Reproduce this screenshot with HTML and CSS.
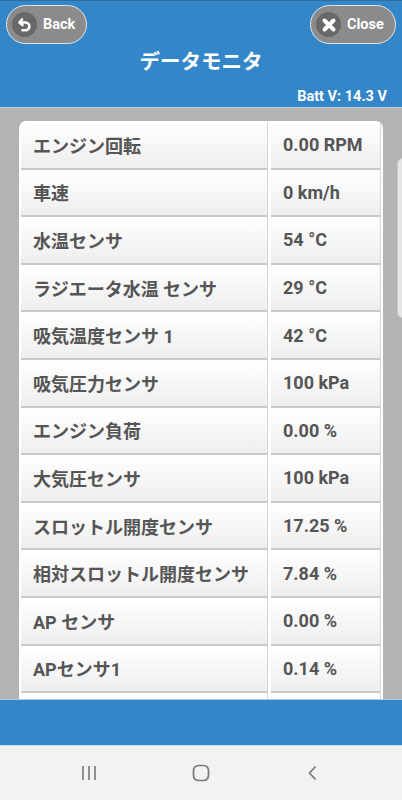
FILE: index.html
```html
<!DOCTYPE html>
<html lang="ja">
<head>
<meta charset="utf-8">
<title>データモニタ</title>
<link rel="stylesheet" href="styles.css">
</head>
<body>
<div class="app">
  <header class="header">
    <div class="btn-row">
      <button class="pill">
        <span class="pill-icon">
          <svg width="24" height="24" viewBox="0 0 24 24"><path d="M9 6.5 L6.5 9.5 L9.5 12" fill="none" stroke="#fff" stroke-width="2.6" stroke-linecap="round" stroke-linejoin="round"/><path d="M7 9.5 H12.5 A3.8 3.8 0 0 1 12.5 17.2 H9.5" fill="none" stroke="#fff" stroke-width="2.6" stroke-linecap="round"/></svg>
        </span>
        <span class="pill-text">Back</span>
      </button>
      <button class="pill pill-close">
        <span class="pill-icon">
          <svg width="24" height="24" viewBox="0 0 24 24"><path d="M7.5 7.5 L16.5 16.5 M16.5 7.5 L7.5 16.5" fill="none" stroke="#fff" stroke-width="4" stroke-linecap="round"/></svg>
        </span>
        <span class="pill-text">Close</span>
      </button>
    </div>
    <h1 class="title">データモニタ</h1>
    <div class="batt">Batt V: 14.3 V</div>
  </header>
  <main class="content">
    <div class="card">
      <div class="cell label">エンジン回転</div><div class="cell value">0.00 RPM</div>
      <div class="cell label">車速</div><div class="cell value">0 km/h</div>
      <div class="cell label">水温センサ</div><div class="cell value">54 °C</div>
      <div class="cell label">ラジエータ水温 センサ</div><div class="cell value">29 °C</div>
      <div class="cell label">吸気温度センサ 1</div><div class="cell value">42 °C</div>
      <div class="cell label">吸気圧力センサ</div><div class="cell value">100 kPa</div>
      <div class="cell label">エンジン負荷</div><div class="cell value">0.00 %</div>
      <div class="cell label">大気圧センサ</div><div class="cell value">100 kPa</div>
      <div class="cell label">スロットル開度センサ</div><div class="cell value">17.25 %</div>
      <div class="cell label">相対スロットル開度センサ</div><div class="cell value">7.84 %</div>
      <div class="cell label">AP センサ</div><div class="cell value">0.00 %</div>
      <div class="cell label">APセンサ1</div><div class="cell value">0.14 %</div>
      <div class="cell label"></div><div class="cell value"></div>
    </div>
    <div class="scroll-thumb"></div>
  </main>
  <footer class="footer"></footer>
  <nav class="navbar">
    <svg width="18" height="18" viewBox="0 0 18 18"><path d="M3 2 V16 M9 2 V16 M15 2 V16" stroke="#777" stroke-width="1.6"/></svg>
    <svg width="20" height="20" viewBox="0 0 20 20"><rect x="2.5" y="2.5" width="15" height="15" rx="5" fill="none" stroke="#777" stroke-width="1.7"/></svg>
    <svg width="18" height="18" viewBox="0 0 18 18"><path d="M11.5 2.5 L5.5 9 L11.5 15.5" fill="none" stroke="#777" stroke-width="1.7"/></svg>
  </nav>
</div>
</body>
</html>
```
FILE: styles.css
```css
* { box-sizing: border-box; }
html, body { margin: 0; padding: 0; }
body {
  font-family: Roboto, "Noto Sans CJK JP", "Noto Sans", sans-serif;
  background: #b3b3b3;
}
.app {
  width: 402px;
  height: 800px;
  display: flex;
  flex-direction: column;
  overflow: hidden;
}
.header {
  height: 108px;
  background: #3386c8;
  border-top: 1px solid #2b6ea6;
  border-bottom: 1px solid #b9d3e8;
  position: relative;
  flex: none;
}
.btn-row {
  display: flex;
  justify-content: space-between;
  padding: 4px 6px 0 6px;
}
.pill {
  height: 39px;
  border-radius: 20px;
  border: 1px solid #e4e4e4;
  background: #8b8b8b;
  display: flex;
  align-items: center;
  gap: 6px;
  padding: 0 0 0 5px;
  width: 81px;
  font-family: Roboto, sans-serif;
}
.pill-close { width: 86px; }
.pill-icon {
  width: 25px;
  height: 25px;
  border-radius: 50%;
  background: #686868;
  display: flex;
  align-items: center;
  justify-content: center;
}
.pill-text {
  color: #fff;
  font-weight: bold;
  font-size: 14.5px;
}
.title {
  margin: 0;
  text-align: center;
  color: #fff;
  font-size: 20.5px;
  font-weight: bold;
  line-height: 26px;
  margin-top: 3px;
  font-family: "Noto Sans CJK JP", sans-serif;
}
.batt {
  position: absolute;
  right: 15px;
  bottom: 2px;
  color: #fff;
  font-weight: bold;
  font-size: 14.5px;
  line-height: 16px;
}
.content {
  flex: 1;
  position: relative;
  overflow: hidden;
  padding: 13px 19px 0 19px;
}
.card {
  background: #fff;
  border-radius: 7px;
  padding: 1px 2px 0 2px;
  display: grid;
  grid-template-columns: 1fr 110px;
  grid-auto-rows: 47.6px;
  column-gap: 3px;
}
.cell {
  display: flex;
  align-items: center;
  padding: 0 12px;
  background: linear-gradient(#ffffff, #eeeeee);
  border-bottom: 2px solid #c9c9c9;
  border-right: 1px solid #d6d6d6;
  color: #555;
  font-weight: bold;
  font-size: 18px;
  white-space: nowrap;
}
.label:first-child { border-top-left-radius: 6px; }
.scroll-thumb {
  position: absolute;
  right: -6px;
  top: 50px;
  width: 11px;
  height: 160px;
  border-radius: 6px;
  background: #e6e6e6;
  border: 1px solid #c8c8c8;
}
.footer {
  height: 47px;
  background: #3386c8;
  border-top: 1px solid #a9cce8;
  border-bottom: 1px solid #c8dff0;
  flex: none;
}
.navbar {
  height: 54px;
  flex: none;
  background: #f2f2f2;
  display: flex;
  align-items: center;
  padding: 0 80px 0 80px;
  justify-content: space-between;
}
```
